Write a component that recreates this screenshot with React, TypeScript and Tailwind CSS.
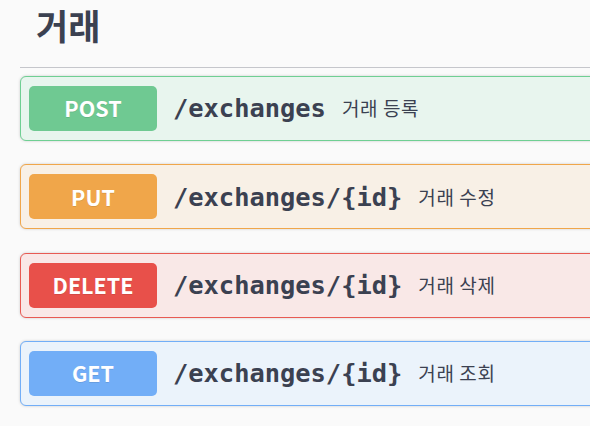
import React from 'react';

type Op = {
    method: string;
    path: string;
    summary: string;
    badge: string;
    block: string;
};

const ops: Op[] = [
    { method: 'POST', path: '/exchanges', summary: '거래 등록', badge: 'bg-[#6fc992]', block: 'bg-[#e8f5ee] border-[#6fcf93]' },
    { method: 'PUT', path: '/exchanges/{id}', summary: '거래 수정', badge: 'bg-[#f0a64a]', block: 'bg-[#f8f0e6] border-[#f0a64a]' },
    { method: 'DELETE', path: '/exchanges/{id}', summary: '거래 삭제', badge: 'bg-[#e8504a]', block: 'bg-[#f9e8e7] border-[#e85a53]' },
    { method: 'GET', path: '/exchanges/{id}', summary: '거래 조회', badge: 'bg-[#72aef7]', block: 'bg-[#ebf3fb] border-[#72aef7]' },
];

const OpBlock: React.FC<{ op: Op }> = ({ op }) => (
    <div className={`flex items-center h-[65px] border rounded-[6px] pl-2 shadow-[0_0_3px_rgba(0,0,0,0.19)] ${op.block}`}>
        <span className={`flex items-center justify-center w-[128px] h-[45px] rounded-[5px] text-white font-bold text-[21.5px] [text-shadow:0_1px_0_rgba(0,0,0,0.1)] font-['Noto_Sans_CJK_KR',sans-serif] ${op.badge}`}>
            {op.method}
        </span>
        <span className="pl-4 pr-4 text-[25.4px] font-bold text-[#3b4151] font-['DejaVu_Sans_Mono',monospace]">
            {op.path}
        </span>
        <span className="text-[19px] tracking-[0.6px] text-[#3b4151] font-['Noto_Sans_CJK_KR',sans-serif]">{op.summary}</span>
    </div>
);

export default function App() {
    return (
        <div className="w-[590px] h-[426px] overflow-hidden bg-[#fafafa] pl-5">
            <div className="w-[600px]">
                <h3 className="h-[68px] pl-4 pt-[1px] text-[35px] font-bold text-[#3b4151] leading-[48px] font-['Noto_Sans_CJK_KR',sans-serif] border-b border-[#c5c6cb]">
                    거래
                </h3>
                <div className="flex flex-col gap-[23.3px] pt-[8px]">
                    {ops.map(op => <OpBlock key={op.method} op={op} />)}
                </div>
            </div>
        </div>
    );
}
